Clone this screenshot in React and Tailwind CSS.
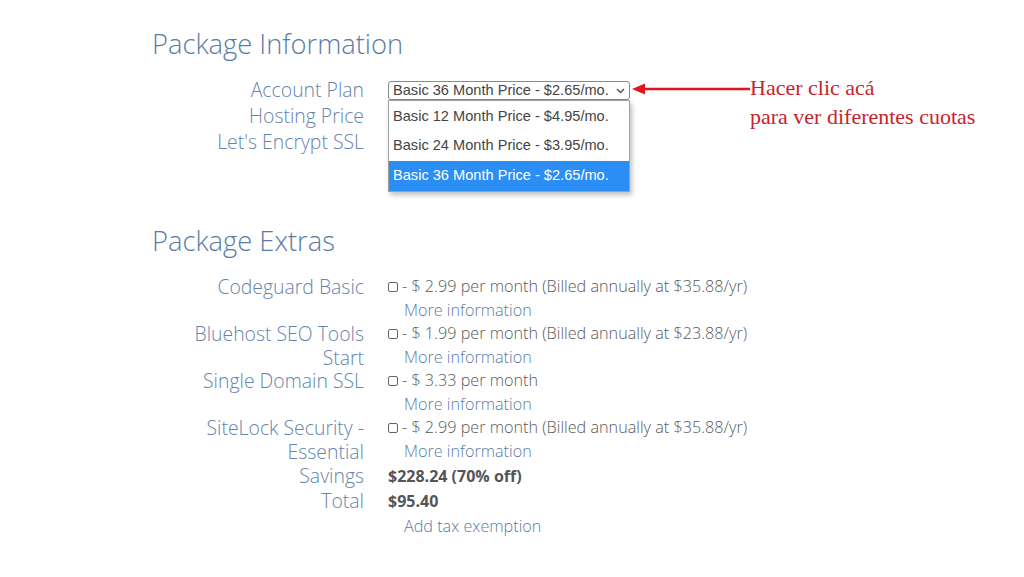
import React from 'react';

const extras = [
  { label: ['Codeguard Basic'], price: '- $ 2.99 per month (Billed annually at $35.88/yr)' },
  { label: ['Bluehost SEO Tools', 'Start'], price: '- $ 1.99 per month (Billed annually at $23.88/yr)' },
  { label: ['Single Domain SSL'], price: '- $ 3.33 per month' },
  { label: ['SiteLock Security -', 'Essential'], price: '- $ 2.99 per month (Billed annually at $35.88/yr)' },
];

const plans = [
  'Basic 12 Month Price - $4.95/mo.',
  'Basic 24 Month Price - $3.95/mo.',
  'Basic 36 Month Price - $2.65/mo.',
];

const Label = ({ children }) => (
  <div className="w-[212px] shrink-0 text-right text-[19.4px] font-light leading-[23.5px] text-[#6584ab]">
    {children}
  </div>
);

export default function App() {
  return (
    <div className="relative w-[1024px] h-[577px] overflow-hidden bg-white font-['Open_Sans',sans-serif]">
      <div className="pl-[152px] pt-[26px]">
        <h2 className="text-[27.3px] font-light leading-[36px] text-[#5b7ba6]">Package Information</h2>

        <div className="mt-[15px] flex flex-col">
          <div className="flex h-[26px] items-center gap-[24px]">
            <Label>Account Plan</Label>
            <div className="relative mt-[1px]">
              <div className="flex h-[19px] w-[242px] items-center justify-between rounded-[3px] border border-[#8a8a8a] pl-[4px] pr-[4px] font-['Liberation_Sans',sans-serif] text-[14.6px] text-[#444]">
                <span>Basic 36 Month Price - $2.65/mo.</span>
                <svg width="9" height="6" viewBox="0 0 9 6" className="mt-[1px]">
                  <path d="M1 1l3.5 3.5L8 1" fill="none" stroke="#555" strokeWidth="1.5" />
                </svg>
              </div>
              <div className="absolute left-0 top-[19px] z-10 w-[242px] border border-[#a0a0a0] bg-white pt-[1px] font-['Liberation_Sans',sans-serif] text-[14.6px] text-[#444] shadow-[2px_3px_5px_rgba(0,0,0,0.25)]">
                {plans.map((p, i) => (
                  <div
                    key={p}
                    className={`flex h-[29.5px] items-center pl-[4px] ${i === 2 ? 'bg-[#2b8ef5] text-white' : ''}`}
                  >
                    {p}
                  </div>
                ))}
              </div>
            </div>
          </div>
          <div className="flex h-[26px] items-center gap-[24px]">
            <Label>Hosting Price</Label>
          </div>
          <div className="flex h-[26px] items-center gap-[24px]">
            <Label>Let's Encrypt SSL</Label>
          </div>
        </div>

        <h2 className="mt-[68px] text-[27.3px] font-light leading-[36px] text-[#5b7ba6]">Package Extras</h2>

        <div className="mt-[16px] flex flex-col">
          {extras.map((e) => (
            <div key={e.price + e.label[0]} className="flex gap-[24px]">
              <Label>
                {e.label.map((l) => (
                  <div key={l}>{l}</div>
                ))}
              </Label>
              <div className="text-[16.2px] font-light leading-[23.5px] text-[#5a5a5a]">
                <div className="flex items-center">
                  <span className="mr-[4px] inline-block h-[10px] w-[10px] rounded-[2px] border border-[#666]" />
                  <span>{e.price}</span>
                </div>
                <div className="pl-[16px] text-[#5b7ba6]">More information</div>
              </div>
            </div>
          ))}
          <div className="flex h-[25px] items-center gap-[24px]">
            <Label>Savings</Label>
            <div className="text-[16px] font-bold text-[#555]">$228.24 (70% off)</div>
          </div>
          <div className="flex h-[25px] items-center gap-[24px]">
            <Label>Total</Label>
            <div className="text-[16px] font-bold text-[#555]">$95.40</div>
          </div>
          <div className="flex h-[27px] items-center gap-[24px]">
            <Label />
            <div className="pl-[16px] text-[16.2px] font-light text-[#5b7ba6]">Add tax exemption</div>
          </div>
        </div>
      </div>

      <svg className="absolute left-[630px] top-[82px]" width="122" height="14" viewBox="0 0 122 14">
        <path d="M14 7H120" stroke="#e3151c" strokeWidth="2.5" />
        <path d="M2 7L15 1.5V12.5Z" fill="#e3151c" />
      </svg>
      <div className="absolute left-[750px] top-[73px] font-['Liberation_Serif',serif] text-[22px] leading-[29px] text-[#c8232b]">
        <div>Hacer clic acá</div>
        <div>para ver diferentes cuotas</div>
      </div>
    </div>
  );
}
